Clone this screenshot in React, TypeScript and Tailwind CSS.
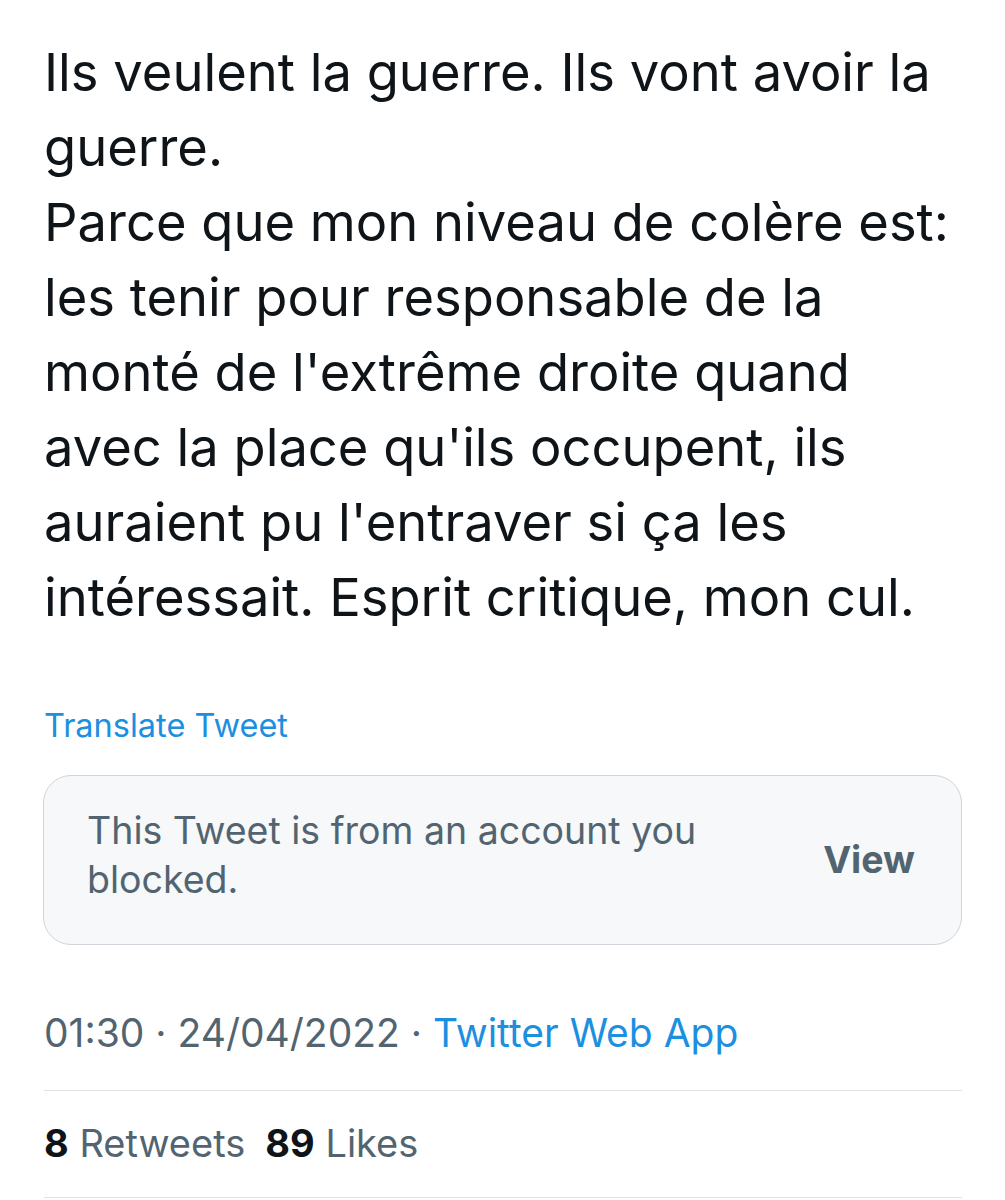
const lines = [
  "Ils veulent la guerre. Ils vont avoir la",
  "guerre.",
  "Parce que mon niveau de colère est:",
  "les tenir pour responsable de la",
  "monté de l'extrême droite quand",
  "avec la place qu'ils occupent, ils",
  "auraient pu l'entraver si ça les",
  "intéressait. Esprit critique, mon cul.",
];

export default function App() {
  return (
    <div
      className="w-[1005px] h-[1200px] bg-white overflow-hidden pl-[44px] pr-[43px]"
      style={{ fontFamily: "Inter, 'Noto Sans', sans-serif" }}
    >
      <div className="pt-[35px] text-[#0f1419] text-[52.5px] leading-[75px]">
        {lines.map((l) => (
          <div key={l} className="whitespace-nowrap">
            {l}
          </div>
        ))}
      </div>

      <div className="mt-[71px] text-[#1d8fe0] text-[32.5px] leading-[40px]">
        Translate Tweet
      </div>

      <div className="mt-[29px] -ml-px flex items-center justify-between rounded-[28px] border border-[#cfd5da] bg-[#f6f8f9] pl-[43px] pr-[46px] pb-[10px] h-[170px]">
        <div className="text-[#536471] text-[37.5px] leading-[49px] w-[640px]">
          This Tweet is from an account you blocked.
        </div>
        <div className="text-[#536471] text-[37.5px] font-bold pt-[10px]">View</div>
      </div>

      <div className="mt-[66px] text-[#536471] text-[39px] leading-[44px]">
        01:30 · 24/04/2022 · <span className="text-[#1d8fe0]">Twitter Web App</span>
      </div>

      <div className="mt-[35px] border-t border-[#e1e4e7]" />

      <div className="pt-[30px] pb-[32px] text-[38px] leading-[44px] text-[#536471] flex gap-[20px]">
        <span>
          <span className="font-bold text-[#0f1419]">8</span> Retweets
        </span>
        <span>
          <span className="font-bold text-[#0f1419]">89</span> Likes
        </span>
      </div>

      <div className="border-t border-[#e1e4e7]" />
    </div>
  );
}
